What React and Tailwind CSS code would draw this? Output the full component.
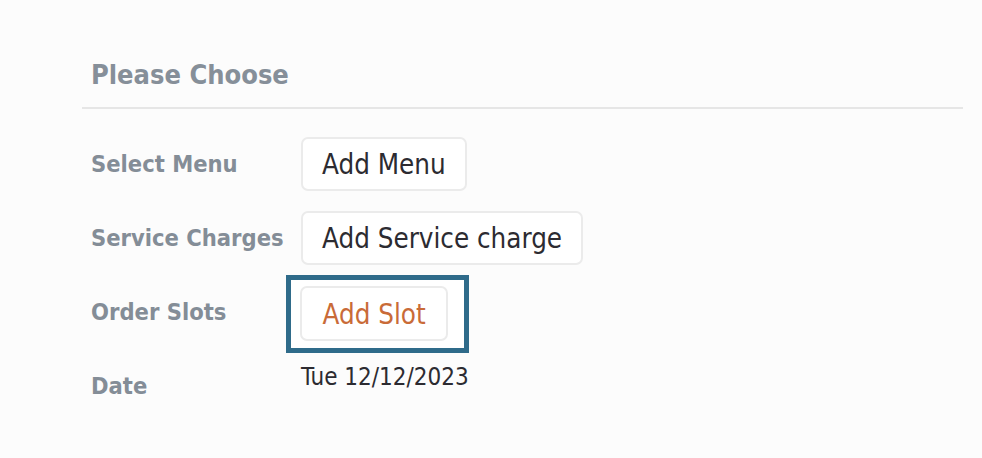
export default function App() {
  const font = { fontFamily: '"DejaVu Sans Condensed", "DejaVu Sans", Tahoma, sans-serif' };
  const rows = [
    { label: 'Select Menu', action: 'Add Menu' },
    { label: 'Service Charges', action: 'Add Service charge' },
  ];

  return (
    <div className="min-h-[458px] w-[982px] bg-[#fcfcfc] font-stretch-condensed" style={font}>
      <div className="ml-[82px] w-[881px] pt-[56px]">
        <div className="border-b-2 border-[#e6e6e6] pb-[13px] pl-[9px]">
          <h2 className="text-[27px] font-bold leading-[38px] text-[#868f99]">Please Choose</h2>
        </div>

        <div className="pl-[9px] pt-[28px]">
          <div className="flex flex-col gap-[20px]">
            {rows.map((r) => (
              <div key={r.label} className="flex items-center">
                <div className="w-[210px] text-[23.5px] font-bold leading-[28px] text-[#848d97]">{r.label}</div>
                <button className="rounded-[7px] border-2 border-[#ebebeb] bg-white px-[19px] py-[9px] text-[27.5px] leading-[32px] text-[#2c2b31]">
                  {r.action}
                </button>
              </div>
            ))}
          </div>

          <div className="mt-[10px] flex items-center">
            <div className="mb-[4px] w-[195px] text-[23.5px] font-bold leading-[28px] text-[#848d97]">Order Slots</div>
            <div className="border-[5px] border-[#2f6b8a] bg-white pb-[7px] pl-[9px] pr-[16px] pt-[6px]">
              <button className="rounded-[7px] border-2 border-[#ebebeb] bg-white px-[20.5px] py-[9.5px] text-[27.5px] leading-[32px] text-[#c96b38]">
                Add Slot
              </button>
            </div>
          </div>

          <div className="mt-[10px] flex items-start">
            <div className="w-[210px] pt-[9px] text-[23.5px] font-bold leading-[28px] text-[#848d97]">Date</div>
            <div className="text-[24px] leading-[28px] text-[#2c2b31]">Tue 12/12/2023</div>
          </div>
        </div>
      </div>
    </div>
  );
}
